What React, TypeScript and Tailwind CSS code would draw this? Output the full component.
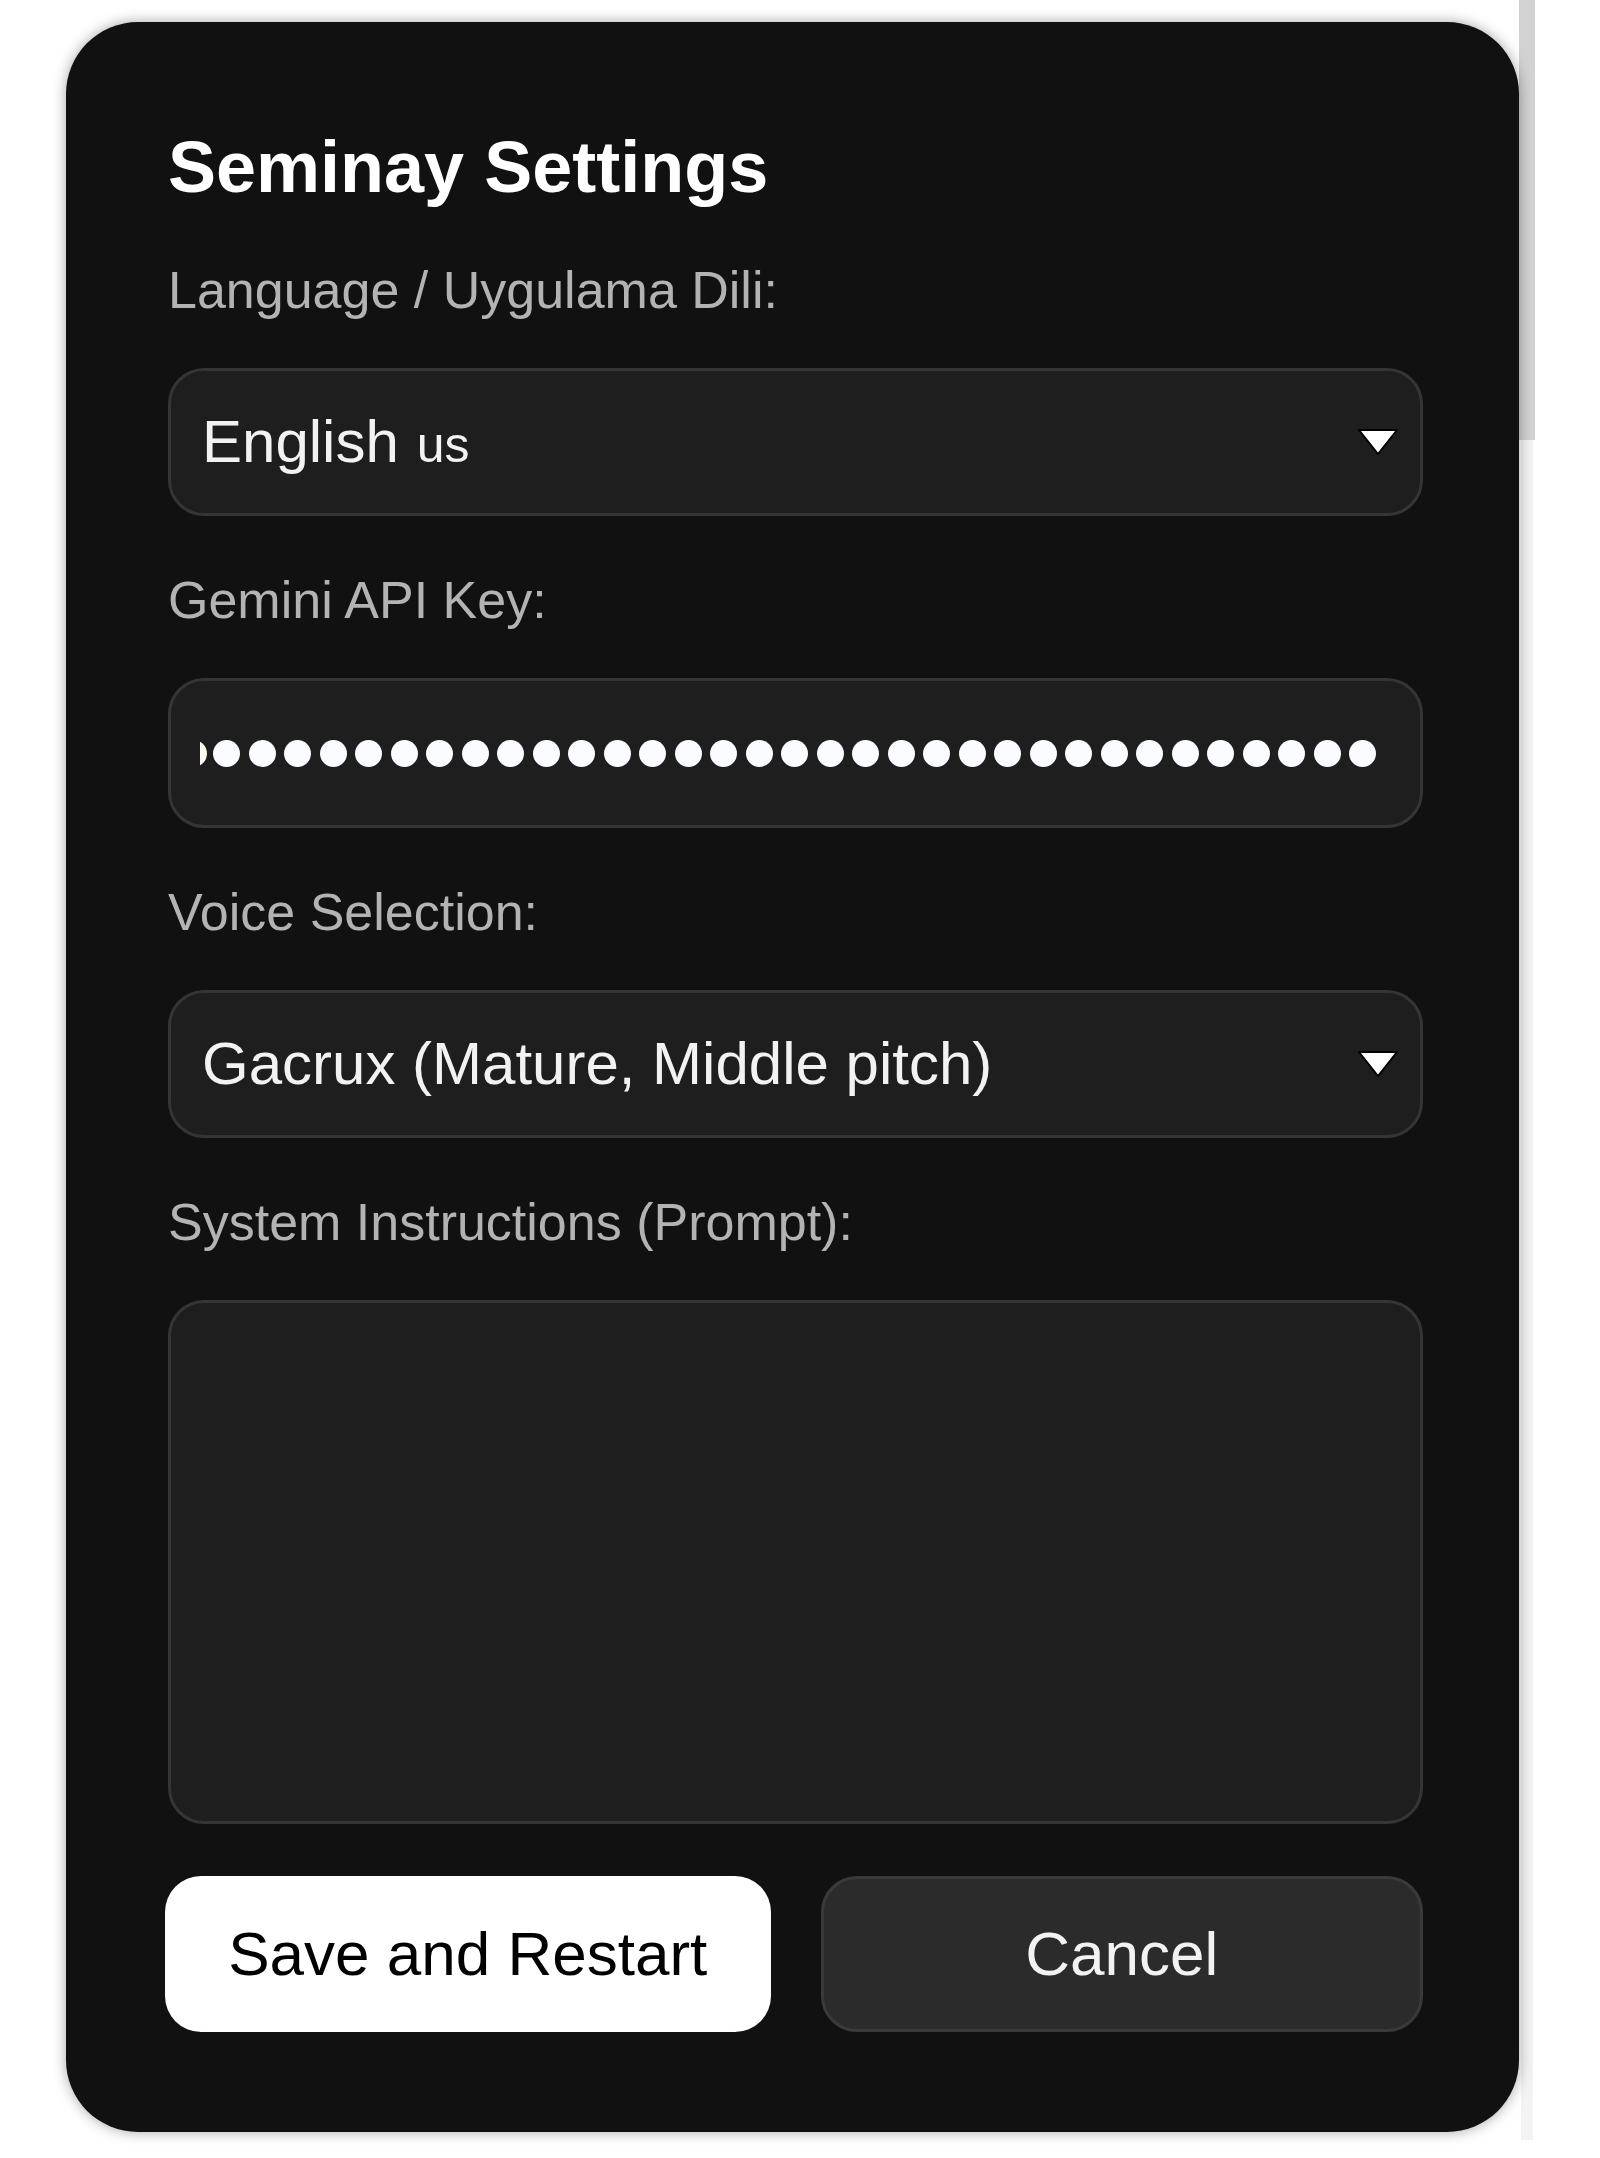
import { useState } from 'react'

// ─── Small pieces ─────────────────────────────────────────────────────────────

function Label({ children }: { children: React.ReactNode }) {
  return (
    <label className="block text-[52px] leading-[52px] text-[#b3b3b3] mb-[52px]">
      {children}
    </label>
  )
}

function Arrow() {
  return (
    <svg width="40" height="26" viewBox="0 0 40 26" className="shrink-0">
      <path d="M1 1 H39 L20 25 Z" fill="#ffffff" stroke="#000000" strokeWidth="2" strokeLinejoin="round" />
    </svg>
  )
}

function FakeSelect({ children }: { children: React.ReactNode }) {
  return (
    <div className="flex items-center justify-between h-[148px] rounded-[36px] border-[3px] border-[#353535] bg-[#1e1e1e] pl-[31px] pr-[22px] mb-[58px]">
      <div className="flex items-baseline text-[60px] leading-none text-[#f2f2f2]">{children}</div>
      <Arrow />
    </div>
  )
}

// ─── Component ────────────────────────────────────────────────────────────────

export default function App() {
  const [prompt, setPrompt] = useState('')
  const dots = Array.from({ length: 33 })

  return (
    <div
      className="relative min-h-[2158px] bg-white pt-[22px]"
      style={{ fontFamily: '"Liberation Sans", Arial, sans-serif' }}
    >
      {/* page scrollbar thumb peeking at the right */}
      <div className="absolute left-[1519px] top-0 w-[16px] h-[440px] bg-[#d2d2d2]" />
      <div className="absolute left-[1521px] top-[440px] w-[12px] h-[1700px] bg-[#f3f3f3]" />

      <div className="relative ml-[66px] w-[1453px] rounded-[72px] bg-[#111111] pl-[102px] pr-[96px] pt-[109px] pb-[100px] shadow-[0_0_14px_rgba(0,0,0,0.35)]">
        <h1 className="text-[72px] leading-[72px] font-bold text-white mb-[61px]">Seminay Settings</h1>

        <Label>Language / Uygulama Dili:</Label>
        <FakeSelect>
          <span>English</span>
          <span className="ml-[18px] text-[50px]">us</span>
        </FakeSelect>

        <Label>Gemini API Key:</Label>
        <div className="flex items-center h-[150px] rounded-[36px] border-[3px] border-[#353535] bg-[#1e1e1e] pl-[29px] mb-[58px] overflow-hidden">
          <div className="w-[7px] h-[27px] overflow-hidden flex justify-end shrink-0">
            <div className="w-[27px] h-[27px] rounded-full bg-[#fdfbf0] shrink-0" />
          </div>
          <div className="flex gap-[8.5px] ml-[6px]">
            {dots.map((_, i) => (
              <div key={i} className="w-[27px] h-[27px] rounded-full bg-[#fbfcff] shrink-0" />
            ))}
          </div>
        </div>

        <Label>Voice Selection:</Label>
        <FakeSelect>
          <span>Gacrux (Mature, Middle pitch)</span>
        </FakeSelect>

        <Label>System Instructions (Prompt):</Label>
        <textarea
          value={prompt}
          onChange={(e) => setPrompt(e.target.value)}
          className="block w-full h-[524px] resize-none rounded-[36px] border-[3px] border-[#353535] bg-[#1e1e1e] text-white text-[52px] p-[30px] outline-none mb-[52px]"
        />

        <div className="grid grid-cols-2 gap-[50px]">
          <button className="h-[156px] rounded-[36px] bg-white text-black text-[62px] leading-none -ml-[3px]">
            Save and Restart
          </button>
          <button className="h-[156px] rounded-[36px] border-[3px] border-[#3a3a3a] bg-[#2b2b2b] text-[#f2f2f2] text-[62px] leading-none">
            Cancel
          </button>
        </div>
      </div>
    </div>
  )
}
